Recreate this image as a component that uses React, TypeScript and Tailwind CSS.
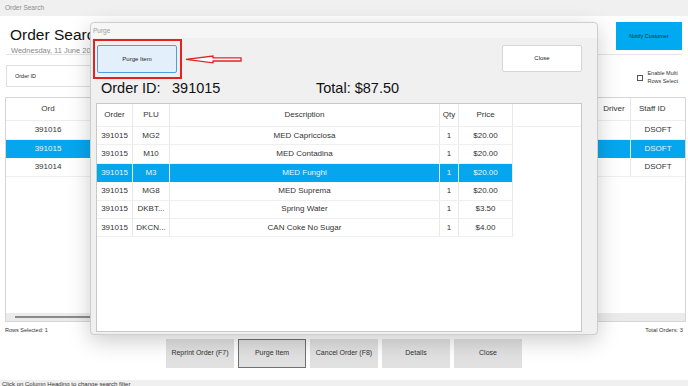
const orderRows = [
  { id: "391016", staff: "DSOFT" },
  { id: "391015", staff: "DSOFT", selected: true },
  { id: "391014", staff: "DSOFT" },
];

const items = [
  { plu: "MG2", desc: "MED Capricciosa", qty: 1, price: "$20.00" },
  { plu: "M10", desc: "MED Contadina", qty: 1, price: "$20.00" },
  { plu: "M3", desc: "MED Funghi", qty: 1, price: "$20.00", selected: true },
  { plu: "MG8", desc: "MED Suprema", qty: 1, price: "$20.00" },
  { plu: "DKBT...", desc: "Spring Water", qty: 1, price: "$3.50" },
  { plu: "DKCN...", desc: "CAN Coke No Sugar", qty: 1, price: "$4.00" },
];

const footerButtons = ["Reprint Order (F7)", "Purge Item", "Cancel Order (F8)", "Details", "Close"];

function PurgeDialog() {
  return (
    <div className="absolute left-[90px] top-[22px] flex h-[313px] w-[508px] flex-col rounded-[4px] border border-[#cdcdcd] bg-[#f0f0f0] shadow-[0_6px_22px_rgba(0,0,0,0.2)]">
      <div className="h-[15px] rounded-t-[4px] bg-[#f6f6f6] pl-[2px] text-[6.5px] leading-[15px] text-[#a0a0a0]">
        Purge
      </div>

      {/* arrow pointing at the purge button */}
      <svg className="absolute left-[94px] top-[32px]" width="58" height="10" viewBox="0 0 58 10">
        <polygon
          points="1,4.4 28,1 28,2.8 56,2.8 56,6 28,6 28,7.8"
          fill="#fff"
          stroke="#e02424"
          strokeWidth="1.3"
          strokeLinejoin="miter"
        />
      </svg>

      <div className="mt-[1px] flex h-[40px] items-start justify-between pl-[2px] pr-[15px]">
        <div className="border-2 border-[#e42222] pb-[4px] pl-[2px] pr-[3px] pt-[4px]">
          <button className="flex h-[28px] w-[80px] items-center justify-center rounded-[2px] border border-[#4f9fe0] bg-[#e3f0fb] text-[6px] text-[#222]">
            Purge Item
          </button>
        </div>
        <button className="mt-[6px] flex h-[27px] w-[80px] items-center justify-center rounded-[2px] border border-[#d6d6d6] bg-white text-[6px] text-[#222]">
          Close
        </button>
      </div>

      <div className="mt-[1px] flex pl-[10px] text-[14.5px] leading-[16px] text-[#111]">
        <div className="flex w-[215px]">
          <span className="w-[71px]">Order ID:</span>
          <span>391015</span>
        </div>
        <span>Total: $87.50</span>
      </div>

      <div className="ml-[5px] mt-[7px] h-[229px] w-[486px] border border-[#c8c8c8] bg-white text-[8px] text-[#333]">
        <div className="flex h-[23px] items-center border-b border-[#ededed]">
          <div className="flex h-full w-[36px] items-center justify-center border-r border-[#e8e8e8]">Order</div>
          <div className="flex h-full w-[37px] items-center justify-center border-r border-[#e8e8e8]">PLU</div>
          <div className="flex h-full w-[270px] items-center justify-center border-r border-[#e8e8e8]">Description</div>
          <div className="flex h-full w-[19px] items-center justify-center border-r border-[#e8e8e8]">Qty</div>
          <div className="flex h-full w-[54px] items-center justify-center border-r border-[#e8e8e8]">Price</div>
        </div>
        {items.map((it) => (
          <div
            key={it.desc}
            className={
              it.selected
                ? "flex h-[18.4px] w-[416px] items-center bg-[#06a6ee] text-[#e4f5ff]"
                : "flex h-[18.4px] w-[416px] items-center border-b border-[#efefef]"
            }
          >
            <div className="flex h-full w-[36px] items-center justify-center border-r border-[#e8e8e8]">391015</div>
            <div className="flex h-full w-[37px] items-center justify-center border-r border-[#e8e8e8]">{it.plu}</div>
            <div className="flex h-full w-[270px] items-center justify-center border-r border-[#e8e8e8]">{it.desc}</div>
            <div className="flex h-full w-[19px] items-center justify-center border-r border-[#e8e8e8]">{it.qty}</div>
            <div className="flex h-full w-[54px] items-center justify-center border-r border-[#e8e8e8]">{it.price}</div>
          </div>
        ))}
      </div>
    </div>
  );
}

export default function App() {
  return (
    <div className="relative h-[386px] w-[688px] overflow-hidden bg-white font-['Liberation_Sans',Arial,sans-serif] text-[#222]">
      <div className="h-[16px] bg-[#f0f0f0] pl-[5px] text-[6.5px] leading-[16px] text-[#8c8c8c]">Order Search</div>

      <div className="flex h-[38px] justify-between px-[6px]">
        {/* the dialog covers the rest of the heading */}
        <div className="w-[84px] overflow-hidden whitespace-nowrap pl-[4px] pt-[7px]">
          <div className="text-[15.5px] text-[#111]">Order Search</div>
          <div className="pl-[1px] text-[7.5px] leading-[9px] text-[#888]">Wednesday, 11 June 2025</div>
        </div>
        <button className="mt-[6px] flex h-[28px] w-[66px] items-center justify-center bg-[#00aaf0] text-[5.5px] text-[#1d3340]">
          Notify Customer
        </button>
      </div>

      <div className="mx-[6px] h-px bg-[#e4e4e4]" />

      <div className="flex h-[42px] items-start justify-between pl-[6px] pr-[10px]">
        <div className="mt-[10px] flex h-[22px] w-[200px] items-center border border-[#e0e0e0] pl-[8px] text-[5.5px]">
          Order ID
        </div>
        <div className="mt-[15px] flex items-center gap-[4px]">
          <div className="h-[6px] w-[6px] border border-[#555] bg-white" />
          <div className="text-[5.5px] leading-[7.5px] text-[#333]">
            Enable Multi
            <br />
            Rows Select
          </div>
        </div>
      </div>

      <div className="ml-[5px] flex h-[225px] w-[681px] flex-col border border-[#d6d6d6] text-[8px] text-[#333]">
        <div className="flex h-[23px] border-b border-[#ededed]">
          <div className="flex w-[85px] items-center justify-center border-r border-[#e8e8e8]">Ord</div>
          <div className="flex-1 border-r border-[#e8e8e8]" />
          <div className="flex w-[33px] items-center justify-center border-r border-[#e8e8e8]">Driver</div>
          <div className="flex w-[54px] items-center pl-[8px]">Staff ID</div>
        </div>
        {orderRows.map((r) => (
          <div
            key={r.id}
            className={
              r.selected
                ? "flex h-[18.5px] bg-[#06a6ee] text-[#e4f5ff]"
                : "flex h-[18.5px] border-b border-[#efefef]"
            }
          >
            <div className="flex w-[85px] items-center justify-center border-r border-[#e8e8e8]">{r.id}</div>
            <div className="flex-1 border-r border-[#e8e8e8]" />
            <div className="w-[33px] border-r border-[#e8e8e8]" />
            <div className="flex w-[54px] items-center justify-center">{r.staff}</div>
          </div>
        ))}
        <div className="flex-1" />
        <div className="flex h-[8px] items-center bg-[#ebebeb] pl-[9px]">
          <div className="h-[1.5px] w-[300px] bg-[#8a8a8a]" />
        </div>
      </div>

      <div className="flex h-[16px] items-center justify-between pl-[5px] pr-[5px] text-[5.5px] text-[#333]">
        <span>Rows Selected: 1</span>
        <span className="text-[5.75px]">Total Orders: 3</span>
      </div>

      <div className="mt-[1px] flex justify-center gap-[4px]">
        {footerButtons.map((b) => (
          <button
            key={b}
            className={
              b === "Purge Item"
                ? "flex h-[29px] w-[68px] items-center justify-center border border-[#707070] bg-[#e1e1e1] text-[7px] text-[#333]"
                : "flex h-[29px] w-[68px] items-center justify-center bg-[#e1e1e1] text-[7px] text-[#333]"
            }
          >
            {b}
          </button>
        ))}
      </div>

      <div className="mt-[12px] h-[14px] bg-[#f0f0f0] pl-[2px] text-[6px] leading-[9px] text-[#333]">
        Click on Column Heading to change search filter
      </div>

      <PurgeDialog />
    </div>
  );
}
